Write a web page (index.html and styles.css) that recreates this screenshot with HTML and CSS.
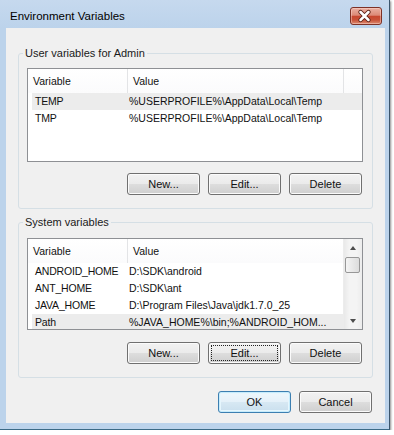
FILE: index.html
```html
<!DOCTYPE html>
<html lang="en">
  <head>
    <meta charset="UTF-8" />
    <title>Environment Variables</title>
    <link rel="stylesheet" href="styles.css">
  </head>
  <body>
    <div class="window">
      <div class="titlebar">
        <span class="title">Environment Variables</span>
        <div class="close">
          <svg width="32" height="18" viewBox="0 0 32 18">
            <path d="M10.5 5 L18.5 13 M18.5 5 L10.5 13" stroke="#5a2016" stroke-width="4.4" stroke-linecap="round" fill="none"/>
            <path d="M10.5 5 L18.5 13 M18.5 5 L10.5 13" stroke="#ffffff" stroke-width="2.5" stroke-linecap="round" fill="none"/>
          </svg>
        </div>
      </div>

      <div class="client">
        <fieldset class="group">
          <legend>User variables for Admin</legend>
          <div class="list">
            <div class="list-body">
              <div class="list-head">
                <div class="hcol">Variable</div>
                <div class="hcol">Value</div>
                <div class="hcol"></div>
              </div>
              <div class="row selected">
                <div class="cell-var">TEMP</div>
                <div class="cell-val">%USERPROFILE%\AppData\Local\Temp</div>
              </div>
              <div class="row">
                <div class="cell-var">TMP</div>
                <div class="cell-val">%USERPROFILE%\AppData\Local\Temp</div>
              </div>
            </div>
          </div>
          <div class="btn-row">
            <button class="btn">New...</button>
            <button class="btn">Edit...</button>
            <button class="btn">Delete</button>
          </div>
        </fieldset>

        <fieldset class="group group-sys">
          <legend>System variables</legend>
          <div class="list list-sys">
            <div class="list-body">
              <div class="list-head">
                <div class="hcol">Variable</div>
                <div class="hcol">Value</div>
              </div>
              <div class="row">
                <div class="cell-var">ANDROID_HOME</div>
                <div class="cell-val">D:\SDK\android</div>
              </div>
              <div class="row">
                <div class="cell-var">ANT_HOME</div>
                <div class="cell-val">D:\SDK\ant</div>
              </div>
              <div class="row">
                <div class="cell-var">JAVA_HOME</div>
                <div class="cell-val">D:\Program Files\Java\jdk1.7.0_25</div>
              </div>
              <div class="row selected">
                <div class="cell-var">Path</div>
                <div class="cell-val">%JAVA_HOME%\bin;%ANDROID_HOM...</div>
              </div>
            </div>
            <div class="scrollbar">
              <div class="sb-btn"><span class="arrow-up"></span></div>
              <div class="sb-track"><div class="sb-thumb"></div></div>
              <div class="sb-btn"><span class="arrow-down"></span></div>
            </div>
          </div>
          <div class="btn-row">
            <button class="btn">New...</button>
            <button class="btn focused">Edit...</button>
            <button class="btn">Delete</button>
          </div>
        </fieldset>

        <div class="dialog-buttons">
          <button class="btn default">OK</button>
          <button class="btn">Cancel</button>
        </div>
      </div>
    </div>
  </body>
</html>
```

FILE: styles.css
```css
body {
  margin: 0;
  background: #ffffff;
  font-family: "Liberation Sans", Arial, sans-serif;
  font-size: 11px;
  color: #000000;
}

.window {
  width: 389px;
  height: 429px;
  background: #bcd3eb;
  border-right: solid 1px #3b556c;
  border-bottom: solid 1px #3b6a86;
  box-shadow: 1px 1px 2px rgba(0, 0, 0, 0.45);
}

.titlebar {
  display: flex;
  justify-content: space-between;
  align-items: flex-start;
  height: 28px;
  background: linear-gradient(#c6d9ee, #bcd3eb);
}
.title {
  padding-left: 10px;
  padding-top: 9px;
  line-height: 14px;
  font-size: 11.5px;
}
.close {
  width: 30px;
  height: 16px;
  margin-top: 7px;
  margin-right: 7px;
  border: solid 1px #7d3126;
  border-radius: 3px;
  background: linear-gradient(#eab0a2 0%, #dc8a77 45%, #c7472f 52%, #c85238 75%, #dc8c73 100%);
  box-shadow: inset 0 0 0 1px rgba(255, 220, 210, 0.45);
  overflow: hidden;
}
.close svg {
  display: block;
  margin: -1px 0 0 -1px;
}

.client {
  width: 355px;
  height: 377px;
  margin-left: 6px;
  padding: 18px 12px 0 12px;
  background: #f0f0f0;
}

.group {
  margin: 0;
  padding: 8px 9px 13px 8px;
  border: solid 1px #d5dfe5;
  border-radius: 3px;
  min-width: 0;
}
.group legend {
  margin-left: -4px;
  padding: 0 2px;
  line-height: 14px;
  color: #1a1a1a;
}
.group-sys {
  margin-top: 6px;
}

.list {
  display: flex;
  height: 92px;
  border: solid 1px #8e9094;
  background: #ffffff;
  overflow: hidden;
  font-size: 10.5px;
  color: #111111;
}
.list-sys {
  height: 90px;
  margin-top: 1px;
}
.list-body {
  flex: 1;
  overflow: hidden;
}
.list-head {
  display: grid;
  grid-template-columns: 100px 216px 1fr;
  height: 24px;
  background: linear-gradient(#ffffff, #fbfbfc);
}
.hcol {
  padding-left: 5px;
  line-height: 24px;
  border-right: solid 1px #e3e4e6;
}
.hcol:last-child {
  border-right: none;
}
.list-sys .list-head {
  grid-template-columns: 100px 1fr;
}

.row {
  display: grid;
  grid-template-columns: 96px 215px;
  height: 17px;
  line-height: 17px;
  margin-left: 4px;
  white-space: nowrap;
}
.row.selected {
  background: #ececec;
}
.cell-var {
  padding-left: 3px;
  letter-spacing: -0.2px;
}
.cell-val {
  padding-left: 1px;
  overflow: hidden;
}

.scrollbar {
  display: flex;
  flex-direction: column;
  width: 18px;
  background: linear-gradient(90deg, #e9e9e9, #f4f4f4 30%, #f4f4f4 70%, #ececec);
  border-left: solid 1px #ececec;
}
.sb-btn {
  display: flex;
  align-items: center;
  justify-content: center;
  height: 17px;
}
.sb-track {
  flex: 1;
  padding-top: 1px;
}
.sb-thumb {
  width: 13px;
  height: 14px;
  margin-left: 1px;
  border: solid 1px #979797;
  border-radius: 2px;
  background: linear-gradient(90deg, #f4f4f4, #e8e8e8 50%, #dcdcdc);
}
.arrow-up {
  border-left: solid 3.5px transparent;
  border-right: solid 3.5px transparent;
  border-bottom: solid 4px #4d4d4d;
}
.arrow-down {
  border-left: solid 3.5px transparent;
  border-right: solid 3.5px transparent;
  border-top: solid 4px #4d4d4d;
}

.btn-row {
  display: flex;
  justify-content: flex-end;
  gap: 8px;
  margin-top: 11px;
  padding-right: 1px;
}
.group-sys .btn-row {
  margin-top: 12px;
}

.btn {
  width: 73px;
  height: 22px;
  padding: 0;
  border: solid 1px #707070;
  border-radius: 3px;
  background: linear-gradient(#f2f2f2 0%, #ebebeb 48%, #dddddd 52%, #cfcfcf 100%);
  box-shadow: inset 0 0 0 1px #fbfbfb;
  font-family: "Liberation Sans", Arial, sans-serif;
  font-size: 11px;
  color: #111111;
}
.btn.focused {
  outline: dotted 1px #222222;
  outline-offset: -4px;
}
.btn.default {
  border-color: #3c7fb1;
  box-shadow: inset 0 0 0 1px #c7ecfc, inset 0 0 0 2px #e6f6fd;
  background: linear-gradient(#eef7fc 0%, #e5f1f9 48%, #d7e8f3 52%, #c9dfee 100%);
}

.dialog-buttons {
  display: flex;
  justify-content: flex-end;
  gap: 8px;
  margin-top: 13px;
  padding-right: 1px;
}
```
